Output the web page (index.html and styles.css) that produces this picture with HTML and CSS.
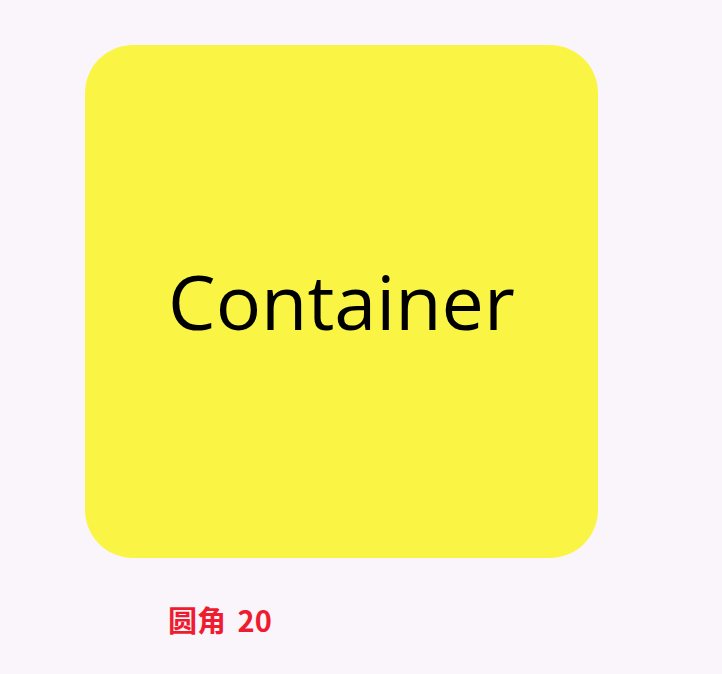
FILE: index.html
```html
<!DOCTYPE html>
<html lang="zh">
<head>
<meta charset="utf-8">
<link rel="stylesheet" href="styles.css">
</head>
<body>
<main class="page">
  <div class="box"><span class="box-text">Container</span></div>
  <div class="caption">圆角 20</div>
</main>
</body>
</html>
```

FILE: styles.css
```css
html, body {
  margin: 0;
  padding: 0;
  background: #f9f5fb;
  width: 722px;
  height: 674px;
  overflow: hidden;
}
.page {
  display: flex;
  flex-direction: column;
  padding: 45px 0 0 85px;
}
.box {
  width: 513px;
  height: 513px;
  border-radius: 48px;
  background: #faf544;
  display: flex;
  align-items: center;
  justify-content: center;
}
.box-text {
  font-family: "Open Sans", "Noto Sans", sans-serif;
  font-size: 75.5px;
  color: #000;
  line-height: 1;
  margin-top: -2px;
}
.caption {
  margin: 41px 0 0 83px;
  font-family: "Noto Sans CJK SC", "Noto Sans", sans-serif;
  font-weight: bold;
  font-size: 29px;
  line-height: 40px;
  word-spacing: 5px;
  color: #ee1c2e;
}
```
